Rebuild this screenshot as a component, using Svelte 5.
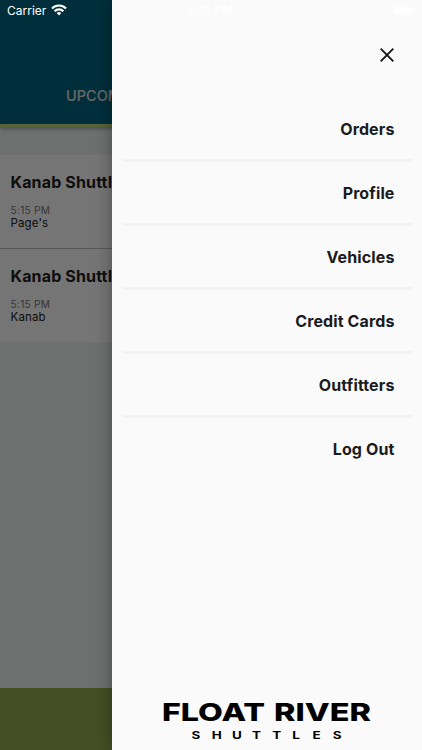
<script lang="ts">
	const shuttles = [
		{ name: 'Kanab Shuttle', time: '5:15 PM', place: "Page's" },
		{ name: 'Kanab Shuttle', time: '5:15 PM', place: 'Kanab' }
	];

	const menu = ['Orders', 'Profile', 'Vehicles', 'Credit Cards', 'Outfitters', 'Log Out'];
</script>

<div class="screen">
	<div class="page">
		<header>
			<div class="tab">UPCOMING</div>
		</header>
		<main>
			{#each shuttles as shuttle}
				<section class="card">
					<h2>{shuttle.name}</h2>
					<div class="time">{shuttle.time}</div>
					<div class="place">{shuttle.place}</div>
				</section>
			{/each}
		</main>
		<footer></footer>
	</div>

	<div class="overlay"></div>

	<aside>
		<button class="close" aria-label="Close">
			<svg width="16" height="16" viewBox="0 0 16 16">
				<path d="M1.7 1.7 14.3 14.3M14.3 1.7 1.7 14.3" stroke="#171717" stroke-width="1.9" />
			</svg>
		</button>
		<nav>
			{#each menu as item}
				<div class="item">{item}</div>
			{/each}
		</nav>
		<svg class="logo" width="214" height="50" viewBox="0 0 214 50">
			<g class="brand">
				<text x="1" y="25" textLength="103" lengthAdjust="spacingAndGlyphs">FLOAT</text>
				<text x="113" y="25" textLength="97" lengthAdjust="spacingAndGlyphs">RIVER</text>
			</g>
			<g class="sub" transform="scale(1.28 1)">
				{#each 'SHUTTLES' as letter, i}
					<text x={(30.6 + i * 20.15) / 1.28} y="42.8">{letter}</text>
				{/each}
			</g>
		</svg>
	</aside>

	<div class="status">
		<span class="carrier">Carrier</span>
		<svg class="wifi" width="16" height="12" viewBox="0 0 16 12">
			<g fill="none" stroke="#fff" stroke-width="2.1">
				<path d="M1 4.4a10 10 0 0 1 14 0" />
				<path d="M3.6 7.2a6.2 6.2 0 0 1 8.8 0" />
			</g>
			<path d="M5.7 9.1a3.3 3.3 0 0 1 4.6 0L8 11.5z" fill="#fff" />
		</svg>
		<span class="clock">5:13 PM</span>
		<svg class="battery" width="25" height="11" viewBox="0 0 25 11">
			<rect x="0.5" y="0.5" width="21" height="10" rx="2.5" fill="none" stroke="#fcfcfc" />
			<rect x="2" y="2" width="18" height="7" rx="1.2" fill="#fff" />
			<path d="M23 3.8q2 1.7 0 3.4z" fill="#fcfcfc" />
		</svg>
	</div>
</div>

<style>
	:global(body) {
		margin: 0;
		font-family: Inter, 'Liberation Sans', sans-serif;
	}

	.screen {
		position: relative;
		width: 422px;
		height: 750px;
		overflow: hidden;
	}

	.page {
		height: 100%;
		display: flex;
		flex-direction: column;
		background: #f0f4f3;
	}

	header {
		box-sizing: border-box;
		height: 127px;
		padding: 86px 0 0 66px;
		background: #006680;
		border-bottom: 3px solid #bcd77a;
		box-shadow: 0 2px 4px rgba(0, 0, 0, 0.3);
	}

	.tab {
		font-size: 14.5px;
		line-height: 20px;
		font-weight: 500;
		color: #e0e0e0;
	}

	main {
		flex: 1;
		padding-top: 28px;
	}

	.card {
		box-sizing: border-box;
		height: 93px;
		padding: 17px 0 0 10.5px;
		background: #fff;
	}

	.card + .card {
		height: 94px;
		border-top: 1px solid #b8c0cb;
	}

	h2 {
		margin: 0 0 12px;
		font-size: 16px;
		line-height: 20px;
		font-weight: 700;
		letter-spacing: 0.15px;
		color: #222;
		white-space: nowrap;
	}

	.time {
		font-size: 10.2px;
		line-height: 13px;
		letter-spacing: 0.25px;
		color: #777;
	}

	.place {
		font-size: 11.5px;
		line-height: 13px;
		letter-spacing: 0.15px;
		color: #222;
	}

	footer {
		height: 62px;
		background: #94ad4f;
	}

	.overlay {
		position: absolute;
		inset: 0;
		background: rgba(0, 0, 0, 0.54);
	}

	aside {
		position: absolute;
		inset: 0 0 0 112.4px;
		display: flex;
		flex-direction: column;
		background: #fafafa;
		box-shadow: 0 0 16px rgba(0, 0, 0, 0.35);
	}

	.close {
		align-self: flex-end;
		display: flex;
		margin: 47px 27px 34px 0;
		padding: 0;
		border: 0;
		background: none;
	}

	nav {
		flex: 1;
		padding: 1px 10px 0 10.6px;
	}

	.item {
		box-sizing: border-box;
		height: 64.1px;
		padding: 21px 17.5px 0 0;
		border-bottom: 3px solid #f2f2f3;
		font-size: 16px;
		line-height: 20px;
		font-weight: 700;
		letter-spacing: 0.12px;
		text-align: right;
		color: #1b1b1b;
	}

	.item:last-child {
		border-bottom: 0;
	}

	.logo {
		margin: 0 0 4px 49px;
		overflow: visible;
	}

	.brand {
		font: 800 24.5px Inter, sans-serif;
	}

	.sub {
		font: 700 10.5px Inter, sans-serif;
	}

	.status {
		position: absolute;
		inset: 0 0 auto;
		display: flex;
		align-items: center;
		height: 21px;
		color: #fff;
		font-size: 12px;
	}

	.carrier {
		width: 44px;
		padding-left: 7px;
	}

	.wifi {
		margin-top: -1px;
	}

	.clock {
		margin-left: 120px;
		font-weight: 600;
	}

	.battery {
		margin-left: auto;
		margin-right: 5px;
	}
</style>
